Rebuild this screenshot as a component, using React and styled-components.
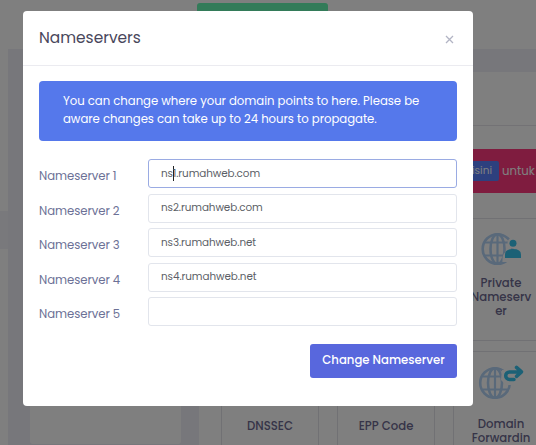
import React from "react";
import styled, { createGlobalStyle } from "styled-components";

const Global = createGlobalStyle`
  * { box-sizing: border-box; }
  html, body { margin: 0; overflow: hidden; }
  body {
    font-family: Poppins, Inter, sans-serif;
    font-feature-settings: "cv11" 1;
    background: #fff;
  }
`;

const Screen = styled.div`
  position: relative;
  display: flex;
  width: 536px;
  height: 445px;
  overflow: hidden;
  background: #fff;
`;
const Rail = styled.div`
  flex: 0 0 8px;
  padding-top: 211px;
`;
const RailMark = styled.div`
  height: 38px;
  background: #f3f2f8;
`;
const Main = styled.div`
  flex: 1;
  display: flex;
  flex-direction: column;
  min-width: 0;
`;
const TopBar = styled.div`
  flex: 0 0 49px;
  padding: 3px 0 0 189px;
`;
const GreenButton = styled.div`
  width: 131px;
  height: 30px;
  border-radius: 3px;
  background: #66f6b2;
`;
const Body = styled.div`
  flex: 1;
  display: flex;
  gap: 18px;
  padding: 23px 0 0 22px;
  min-height: 0;
  background: #efeef7;
`;
const Sidebar = styled.div`
  flex: 0 0 151px;
  height: 372px;
  border-radius: 3px;
  background: #fff;
`;
const Content = styled.div`
  flex: 0 0 380px;
  padding: 53px 0 0 22px;
  background: #fff;
`;
const Section = styled.div`
  border-top: 1px solid #e6e5ea;
  padding-top: 23px;
`;
const Banner = styled.div`
  display: flex;
  align-items: center;
  gap: 3px;
  height: 44px;
  padding-left: 228px;
  background: #ff387f;
  color: #fff;
  font-size: 12px;
`;
const BannerLink = styled.span`
  width: 50px;
  height: 20px;
  padding-right: 7px;
  border-radius: 2px;
  background: #5a80fc;
  font-size: 10.5px;
  line-height: 19px;
  text-align: right;
`;
const BannerText = styled.span`
  font-size: 11.7px;
`;
const Tiles = styled.div`
  display: grid;
  grid-template-columns: repeat(3, 98px);
  grid-auto-rows: 123px;
  gap: 10px 18px;
  margin-top: 25px;
`;
const Tile = styled.div`
  display: flex;
  flex-direction: column;
  align-items: center;
  padding: 13px 2px 0 0;
  border: 1px solid #e2e2e8;
  border-radius: 3px;
  color: #6c6990;
  font-size: 11.7px;
  font-weight: 500;
  line-height: 14px;
  text-align: center;
`;
const TileIcon = styled.svg`
  flex: 0 0 34px;
  width: 48px;
  height: 34px;
  margin-bottom: ${(p) => p.$gap}px;
`;
const Shade = styled.div`
  position: absolute;
  inset: 0;
  background: rgba(0, 0, 0, 0.5);
`;
const Modal = styled.div`
  position: absolute;
  top: 11px;
  left: 23px;
  width: 450px;
  height: 395px;
  border-radius: 4px;
  background: #fff;
`;
const ModalHeader = styled.div`
  display: flex;
  align-items: center;
  justify-content: space-between;
  height: 55px;
  padding: 0 19px 2px 16px;
  border-bottom: 1px solid #ebebf0;
`;
const Title = styled.h1`
  margin: 0;
  color: #48465b;
  font-size: 15.4px;
  font-weight: 400;
`;
const CloseIcon = styled.svg`
  width: 9px;
  height: 9px;
  margin-top: 4px;
`;
const ModalBody = styled.div`
  padding: 15px 16px 0;
`;
const Alert = styled.div`
  height: 60px;
  padding: 11px 0 0 24px;
  border-radius: 4px;
  background: #5578eb;
  color: #fff;
  font-size: 11.7px;
  letter-spacing: -0.03px;
  line-height: 18px;
  white-space: nowrap;
`;
const Form = styled.div`
  display: flex;
  flex-direction: column;
  gap: 5.6px;
  margin-top: 18px;
`;
const Row = styled.label`
  display: grid;
  grid-template-columns: 109px 309px;
  height: 29px;
`;
const Label = styled.span`
  padding-top: 4px;
  color: #6c7196;
  font-size: 11.7px;
  letter-spacing: -0.05px;
  line-height: 26px;
`;
const Field = styled.span`
  display: flex;
  align-items: center;
  height: 29px;
  padding-left: 12px;
  border: 1px solid ${(p) => (p.$focused ? "#9aabe3" : "#e2e5ec")};
  border-radius: 3px;
  color: #5c5f67;
  font-size: 10.4px;
  letter-spacing: -0.08px;
`;
const Caret = styled.i`
  width: 1px;
  height: 15px;
  margin-right: -1px;
  background: #222;
`;
const Actions = styled.div`
  display: flex;
  justify-content: flex-end;
  margin-top: 18px;
`;
const Submit = styled.button`
  width: 147px;
  height: 34px;
  padding: 0 0 2px;
  border: 0;
  border-radius: 3px;
  background: #5867dd;
  color: #fff;
  font-family: inherit;
  font-feature-settings: inherit;
  font-size: 11.7px;
  font-weight: 500;
  white-space: nowrap;
`;

const Globe = () => (
  <g fill="none" stroke="#b3d2f5" strokeWidth="2.6">
    <circle cx="17" cy="17" r="14.8" />
    <ellipse cx="17" cy="17" rx="7" ry="14.8" />
    <path d="M17 2v30M4.5 10.5h25M4.5 23.5h25" strokeWidth="2.2" />
  </g>
);
const PrivateIcon = () => (
  <TileIcon viewBox="0 0 48 34" $gap={10}>
    <g transform="translate(3.5 0)">
      <Globe />
      <path d="M22 27c0-6 4-9 11-9h9v12H22z" fill="#fff" />
      <circle cx="32.5" cy="11" r="5.5" fill="#fff" />
      <circle cx="32.5" cy="11.2" r="3.5" fill="#38c2ec" />
      <path d="M24.5 26v-3.5q0-5.5 8-5.5t8 5.5V26z" fill="#38c2ec" />
    </g>
  </TileIcon>
);
const ForwardIcon = () => (
  <TileIcon viewBox="0 0 48 34" $gap={18}>
    <g transform="translate(1 1)">
      <Globe />
      <path d="M24 4h20v15H28l-5-5z" fill="#fff" />
      <path
        d="M36 13.5h-4.5a3.8 3.8 0 0 1 0-7.6H42M38.5 1.4l5 4.5-5 4.5"
        fill="none"
        stroke="#38c2ec"
        strokeWidth="3.5"
        strokeLinecap="round"
        strokeLinejoin="round"
      />
    </g>
  </TileIcon>
);
const TextTile = styled(Tile)`
  padding: 67px 0 0;
`;

const servers = ["ns1.rumahweb.com", "ns2.rumahweb.com", "ns3.rumahweb.net", "ns4.rumahweb.net", ""];

export default function App() {
  return (
    <Screen>
      <Global />
      <Rail>
        <RailMark />
      </Rail>
      <Main>
        <TopBar>
          <GreenButton />
        </TopBar>
        <Body>
          <Sidebar />
          <Content>
            <Section>
              <Banner>
                <BannerLink>disini</BannerLink>
                <BannerText>untuk</BannerText>
              </Banner>
              <Tiles>
                <Tile />
                <Tile />
                <Tile>
                  <PrivateIcon />
                  Private
                  <br />
                  Nameserv
                  <br />
                  er
                </Tile>
                <TextTile>DNSSEC</TextTile>
                <TextTile>EPP Code</TextTile>
                <Tile>
                  <ForwardIcon />
                  Domain
                  <br />
                  Forwardin
                </Tile>
              </Tiles>
            </Section>
          </Content>
        </Body>
      </Main>
      <Shade />
      <Modal>
        <ModalHeader>
          <Title>Nameservers</Title>
          <CloseIcon viewBox="0 0 9 9">
            <path d="M1 1l7 7M8 1l-7 7" fill="none" stroke="#b2b4c4" strokeWidth="1.3" />
          </CloseIcon>
        </ModalHeader>
        <ModalBody>
          <Alert>
            You can change where your domain points to here. Please be
            <br />
            aware changes can take up to 24 hours to propagate.
          </Alert>
          <Form>
            {servers.map((value, i) => (
              <Row key={i}>
                <Label>Nameserver {i + 1}</Label>
                <Field $focused={i === 0}>
                  {value.slice(0, 2)}
                  {i === 0 && <Caret />}
                  {value.slice(2)}
                </Field>
              </Row>
            ))}
          </Form>
          <Actions>
            <Submit>Change Nameserver</Submit>
          </Actions>
        </ModalBody>
      </Modal>
    </Screen>
  );
}
